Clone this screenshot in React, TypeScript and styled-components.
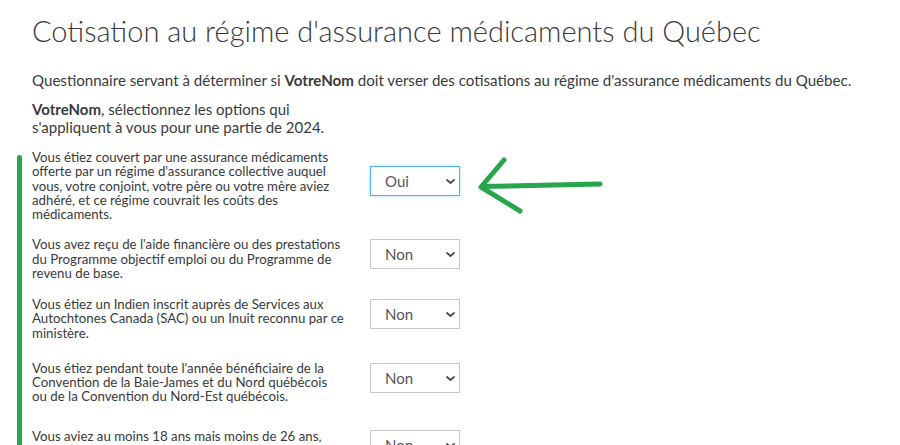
import React from "react";
import styled, { createGlobalStyle } from "styled-components";

const GlobalStyle = createGlobalStyle`
  html, body {
    margin: 0;
    padding: 0;
    background: #ffffff;
    overflow: hidden;
  }
  body {
    font-family: Lato, "Open Sans", "Liberation Sans", sans-serif;
    color: #393a3d;
  }
`;

const Page = styled.div`
  position: relative;
  width: 900px;
  height: 445px;
  overflow: hidden;
  padding: 0 32px;
  box-sizing: border-box;
`;

const Title = styled.h1`
  margin: 0;
  padding-top: 13px;
  font-size: 29px;
  font-weight: 300;
  line-height: 36px;
  color: #393a3d;
`;

const Intro = styled.p`
  margin: 22px 0 0;
  font-size: 15.1px;
  line-height: 18px;
  color: #393a3d;
`;

const Lead = styled.p`
  margin: 11px 0 0;
  width: 300px;
  font-size: 15px;
  line-height: 18px;
  color: #393a3d;
`;

const QuestionList = styled.div`
  position: relative;
  margin: 14px 0 0 -15px;
  padding: 0 0 40px 15px;
  display: flex;
  flex-direction: column;

  &::before {
    content: "";
    position: absolute;
    left: 0;
    top: 5px;
    bottom: 0;
    width: 5px;
    border-radius: 3px 3px 0 0;
    background: #27a64b;
  }
`;

const Row = styled.div<{ $gap: number }>`
  display: grid;
  grid-template-columns: 338px 90px;
  align-items: center;
  margin-top: ${(p) => p.$gap}px;
`;

const QuestionText = styled.div`
  font-size: 13.25px;
  line-height: 14.25px;
  color: #393a3d;
  white-space: nowrap;
`;

const SelectWrap = styled.div`
  position: relative;
  width: 90px;
  height: 30px;
  margin-bottom: 9px;
`;

const Select = styled.select<{ $focused?: boolean }>`
  appearance: none;
  -webkit-appearance: none;
  width: 90px;
  height: 30px;
  box-sizing: border-box;
  border: 1px solid ${(p) => (p.$focused ? "#56b3e8" : "#c3c6cb")};
  box-shadow: ${(p) => (p.$focused ? "0 0 3px #9ed7f7" : "none")};
  border-radius: 0;
  background: #ffffff;
  padding: 0 0 0 14px;
  font-family: Lato, "Open Sans", "Liberation Sans", sans-serif;
  font-size: 15px;
  color: #55565b;
  outline: none;
`;

const Chevron = styled.svg`
  position: absolute;
  right: 5px;
  top: 13px;
  pointer-events: none;
`;

const Arrow = styled.svg`
  position: absolute;
  left: 470px;
  top: 150px;
`;

type Question = {
  lines: string[];
  value: string;
  focused?: boolean;
  gap: number;
};

const questions: Question[] = [
  {
    lines: [
      "Vous étiez couvert par une assurance médicaments",
      "offerte par un régime d'assurance collective auquel",
      "vous, votre conjoint, votre père ou votre mère aviez",
      "adhéré, et ce régime couvrait les coûts des",
      "médicaments.",
    ],
    value: "Oui",
    focused: true,
    gap: 0,
  },
  {
    lines: [
      "Vous avez reçu de l'aide financière ou des prestations",
      "du Programme objectif emploi ou du Programme de",
      "revenu de base.",
    ],
    value: "Non",
    gap: 16,
  },
  {
    lines: [
      "Vous étiez un Indien inscrit auprès de Services aux",
      "Autochtones Canada (SAC) ou un Inuit reconnu par ce",
      "ministère.",
    ],
    value: "Non",
    gap: 17,
  },
  {
    lines: [
      "Vous étiez pendant toute l'année bénéficiaire de la",
      "Convention de la Baie-James et du Nord québécois",
      "ou de la Convention du Nord-Est québécois.",
    ],
    value: "Non",
    gap: 21,
  },
  {
    lines: [
      "Vous aviez au moins 18 ans mais moins de 26 ans,",
      "étiez inscrit à temps plein à un établissement",
      "d'enseignement et n'aviez pas de conjoint.",
    ],
    value: "Non",
    gap: 25,
  },
];

export default function App() {
  return (
    <>
      <GlobalStyle />
      <Page>
        <Title>Cotisation au régime d'assurance médicaments du Québec</Title>
        <Intro>
          Questionnaire servant à déterminer si <b>VotreNom</b> doit verser des
          cotisations au régime d'assurance médicaments du Québec.
        </Intro>
        <Lead>
          <b>VotreNom</b>, sélectionnez les options qui s'appliquent à vous pour
          une partie de 2024.
        </Lead>
        <QuestionList>
          {questions.map((q, i) => (
            <Row key={i} $gap={q.gap}>
              <QuestionText>
                {q.lines.map((line, j) => (
                  <React.Fragment key={j}>
                    {line}
                    {j < q.lines.length - 1 && <br />}
                  </React.Fragment>
                ))}
              </QuestionText>
              <SelectWrap>
                <Select $focused={q.focused} defaultValue={q.value}>
                  <option value="Oui">Oui</option>
                  <option value="Non">Non</option>
                </Select>
                <Chevron width="9" height="5" viewBox="0 0 9 5">
                  <path
                    d="M1 1 L4.5 4 L8 1"
                    fill="none"
                    stroke="#4a4b50"
                    strokeWidth="1.8"
                    strokeLinecap="round"
                    strokeLinejoin="round"
                  />
                </Chevron>
              </SelectWrap>
            </Row>
          ))}
        </QuestionList>
        <Arrow width="140" height="70" viewBox="0 0 140 70">
          <g
            fill="none"
            stroke="#27a64b"
            strokeWidth="5"
            strokeLinecap="round"
            strokeLinejoin="round"
          >
            <path d="M130 34 L12 36.5" />
            <path d="M34 10 L11 37 L50 61" />
          </g>
        </Arrow>
      </Page>
    </>
  );
}
